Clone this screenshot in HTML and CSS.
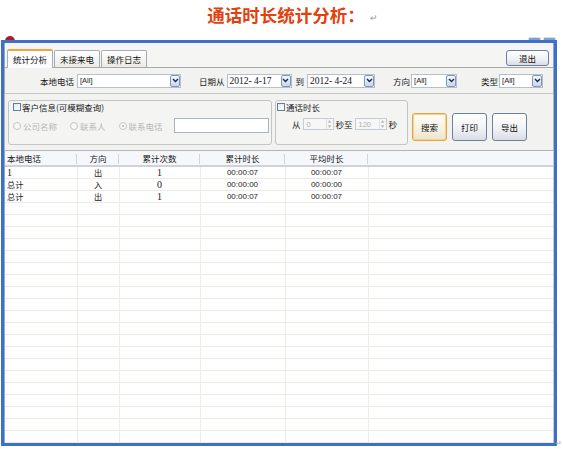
FILE: index.html
```html
<!DOCTYPE html>
<html>
<head>
<meta charset="utf-8">
<link rel="stylesheet" href="styles.css">
</head>
<body>
<div class="doc-title"><span class="t">通话时长统计分析：</span><span class="ret">↵</span></div>
<span class="appicon"></span>
<span class="capbtns"><i></i><i></i></span>
<div class="window">
  <div class="tabbar">
    <div class="tab active">统计分析</div>
    <div class="tab">未接来电</div>
    <div class="tab">操作日志</div>
    <button class="btn exit">退出</button>
  </div>
  <div class="filters">
    <span class="lbl l1">本地电话</span>
    <div class="combo c1"><span class="val">[All]</span><span class="dd"><svg width="7" height="5" viewBox="0 0 7 5"><path d="M1 1l2.5 2.5L6 1" stroke="#1d2a44" stroke-width="1.4" fill="none"/></svg></span></div>
    <span class="lbl l2">日期从</span>
    <div class="combo date d1"><span class="val">2012- 4-17</span><span class="dd"><svg width="7" height="5" viewBox="0 0 7 5"><path d="M1 1l2.5 2.5L6 1" stroke="#1d2a44" stroke-width="1.4" fill="none"/></svg></span></div>
    <span class="lbl l3">到</span>
    <div class="combo date d2"><span class="val">2012- 4-24</span><span class="dd"><svg width="7" height="5" viewBox="0 0 7 5"><path d="M1 1l2.5 2.5L6 1" stroke="#1d2a44" stroke-width="1.4" fill="none"/></svg></span></div>
    <span class="lbl l4">方向</span>
    <div class="combo c2"><span class="val">[All]</span><span class="dd"><svg width="7" height="5" viewBox="0 0 7 5"><path d="M1 1l2.5 2.5L6 1" stroke="#1d2a44" stroke-width="1.4" fill="none"/></svg></span></div>
    <span class="lbl l5">类型</span>
    <div class="combo c3"><span class="val">[All]</span><span class="dd"><svg width="7" height="5" viewBox="0 0 7 5"><path d="M1 1l2.5 2.5L6 1" stroke="#1d2a44" stroke-width="1.4" fill="none"/></svg></span></div>
  </div>
  <div class="query">
    <div class="group g1">
      <div class="gtitle"><span class="chk"></span>客户信息(可模糊查询)</div>
      <div class="radios">
        <span class="radio"></span><span class="rl">公司名称</span>
        <span class="radio"></span><span class="rl">联系人</span>
        <span class="radio on"></span><span class="rl">联系电话</span>
        <span class="textbox"></span>
      </div>
    </div>
    <div class="group g2">
      <div class="gtitle"><span class="chk"></span>通话时长</div>
      <div class="spins">
        <span class="sl">从</span>
        <span class="spin s1"><span class="sv">0</span><span class="arr"><b>▲</b><b>▼</b></span></span>
        <span class="sl">秒至</span>
        <span class="spin s2"><span class="sv">120</span><span class="arr"><b>▲</b><b>▼</b></span></span>
        <span class="sl">秒</span>
      </div>
    </div>
    <button class="btn big focus">搜索</button>
    <button class="btn big">打印</button>
    <button class="btn big">导出</button>
  </div>
  <div class="grid">
    <table>
      <colgroup><col class="k1"><col class="k2"><col class="k3"><col class="k4"><col class="k5"><col></colgroup>
      <thead>
        <tr><th class="left">本地电话</th><th>方向</th><th>累计次数</th><th>累计时长</th><th>平均时长</th><th></th></tr>
      </thead>
      <tbody>
        <tr><td class="name num">1</td><td class="dir">出</td><td class="cnt">1</td><td class="tm">00:00:07</td><td class="tm">00:00:07</td><td></td></tr>
        <tr><td class="name">总计</td><td class="dir">入</td><td class="cnt">0</td><td class="tm">00:00:00</td><td class="tm">00:00:00</td><td></td></tr>
        <tr><td class="name">总计</td><td class="dir">出</td><td class="cnt">1</td><td class="tm">00:00:07</td><td class="tm">00:00:07</td><td></td></tr>
        <tr><td></td><td></td><td></td><td></td><td></td><td></td></tr>
        <tr><td></td><td></td><td></td><td></td><td></td><td></td></tr>
        <tr><td></td><td></td><td></td><td></td><td></td><td></td></tr>
        <tr><td></td><td></td><td></td><td></td><td></td><td></td></tr>
        <tr><td></td><td></td><td></td><td></td><td></td><td></td></tr>
        <tr><td></td><td></td><td></td><td></td><td></td><td></td></tr>
        <tr><td></td><td></td><td></td><td></td><td></td><td></td></tr>
        <tr><td></td><td></td><td></td><td></td><td></td><td></td></tr>
        <tr><td></td><td></td><td></td><td></td><td></td><td></td></tr>
        <tr><td></td><td></td><td></td><td></td><td></td><td></td></tr>
        <tr><td></td><td></td><td></td><td></td><td></td><td></td></tr>
        <tr><td></td><td></td><td></td><td></td><td></td><td></td></tr>
        <tr><td></td><td></td><td></td><td></td><td></td><td></td></tr>
        <tr><td></td><td></td><td></td><td></td><td></td><td></td></tr>
        <tr><td></td><td></td><td></td><td></td><td></td><td></td></tr>
        <tr><td></td><td></td><td></td><td></td><td></td><td></td></tr>
        <tr><td></td><td></td><td></td><td></td><td></td><td></td></tr>
        <tr><td></td><td></td><td></td><td></td><td></td><td></td></tr>
        <tr><td></td><td></td><td></td><td></td><td></td><td></td></tr>
        <tr><td></td><td></td><td></td><td></td><td></td><td></td></tr>
        <tr><td></td><td></td><td></td><td></td><td></td><td></td></tr>
        <tr><td></td><td></td><td></td><td></td><td></td><td></td></tr>
      </tbody>
    </table>
  </div>
</div>
<span class="ret2">↵</span>
</body>
</html>
```
FILE: styles.css
```css
* { box-sizing: border-box; margin: 0; padding: 0; }
html, body { background: #fff; }
body {
  width: 563px; height: 449px; overflow: hidden; position: relative;
  font-family: "Noto Sans CJK SC", "Liberation Sans", sans-serif;
  font-size: 8.5px; color: #1a1a1a;
}
.doc-title {
  height: 40px; display: flex; justify-content: center; align-items: flex-start;
  padding-top: 5px; padding-left: 22px;
}
.doc-title .t { font-size: 17.5px; font-weight: 700; color: #e2410e; line-height: 20px; }
.doc-title .ret { font-size: 9px; color: #9a9a9a; margin-left: 5px; line-height: 20px; margin-top: 3px; }

.appicon { position: absolute; left: 5px; top: 36px; width: 10px; height: 5px; background: #a8202a; border-radius: 5px 5px 0 0; }
.capbtns { position: absolute; left: 528px; top: 37px; display: flex; gap: 2px; }
.capbtns i { display: block; width: 13px; height: 4px; border: 1px solid #d6def0; border-bottom: none; background: #7f9fd8; border-radius: 2px 2px 0 0; }

.window {
  position: relative; margin-left: 1px; width: 556px; height: 406px;
  border: solid #3e70c8; border-width: 3px 3px 3px 3px;
  background: #f0f0ee; display: flex; flex-direction: column;
  box-shadow: inset 0 0 0 1px #8aa6d8;
}

/* tabs */
.tabbar {
  height: 24px; display: flex; align-items: flex-end; padding-left: 2px; background: #f5f5f3;
  border-left: 1px solid #8aa6d8; border-right: 1px solid #8aa6d8;
}
.tab {
  height: 17px; padding: 0 5px; line-height: 16px; font-size: 8.5px;
  border: 1px solid #a4acbc; border-bottom: none; border-radius: 2px 2px 0 0;
  background: linear-gradient(#ffffff, #ecebe6); margin-right: 1px; color: #111;
}
.tab.active {
  height: 19px; line-height: 17px; background: #fcfcfe;
  border-top: 2px solid #f0a53a; margin-bottom: -1px; position: relative; z-index: 1;
}
.btn {
  font-family: "Noto Sans CJK SC", "Liberation Sans", sans-serif; font-size: 8.5px; color: #111;
  border: 1px solid #6c7f9c; border-radius: 3px;
  background: linear-gradient(#ffffff, #f1f2f5 55%, #d9dde5);
}
.btn.exit { margin-left: auto; align-self: flex-start; margin-top: 7px; margin-right: 4px; width: 43px; height: 16px; }

/* filter row */
.filters {
  height: 27px; display: flex; align-items: center;
  border: 1px solid #a8a8a8; border-bottom-color: #c6c6c6; background: #f2f2f0;
}
.lbl { white-space: nowrap; }
.l1 { margin-left: 35px; }
.l2 { margin-left: 18px; }
.l3 { margin-left: 4px; }
.l4 { margin-left: 18px; }
.l5 { margin-left: 24px; }
.combo {
  height: 14px; display: flex; align-items: center; justify-content: space-between;
  background: #fff; border: 1px solid #b6c0cc; padding-left: 2px;
}
.combo .val { font-family: "Liberation Sans", sans-serif; font-size: 7.5px; color: #222; }
.combo.date .val { font-family: "Liberation Serif", serif; font-size: 9.5px; color: #111; }
.dd {
  width: 10px; height: 12px; display: flex; align-items: center; justify-content: center;
  border: 1px solid #7f95bb; border-radius: 2px; background: linear-gradient(#f4f7fc, #c9d6ec);
}
.c1 { margin-left: 3px; width: 104px; }
.d1 { margin-left: 2px; width: 65px; }
.d2 { margin-left: 3px; width: 68px; }
.c2 { margin-left: 1px; width: 46px; }
.c3 { margin-left: 1px; width: 44px; }

/* query */
.query {
  height: 57px; display: flex; align-items: flex-start; padding: 6px 0 0 3px;
  border: 1px solid #b4b4b4; border-top: none; background: #f2f2f0;
}
.group { height: 45px; border: 1px solid #c4c4c4; border-radius: 3px; background: #f4f4f2; }
.g1 { width: 264px; padding: 1px 0 0 4px; }
.g2 { width: 133px; margin-left: 3px; padding: 1px 0 0 1px; }
.gtitle { display: flex; align-items: center; height: 10px; white-space: nowrap; }
.chk {
  width: 8px; height: 8px; border: 1px solid #5e7ea8; background: linear-gradient(135deg, #e6e6e0, #fff);
  margin-right: 1px;
}
.radios { display: flex; align-items: center; margin-top: 6px; color: #b8b8b8; }
.radio {
  width: 8px; height: 8px; border: 1px solid #c4c4c4; border-radius: 50%; background: #f8f8f8;
  margin-right: 2px; position: relative;
}
.radio.on::after { content: ""; position: absolute; left: 2px; top: 2px; width: 2px; height: 2px; border-radius: 50%; background: #b0b0b0; }
.rl { margin-right: 13px; }
.textbox { width: 95px; height: 15px; border: 1px solid #a8b4c0; background: #fff; margin-left: -2px; }
.spins { display: flex; align-items: center; margin-top: 6px; padding-left: 15px; }
.sl { color: #222; }
.spin {
  height: 12px; display: flex; align-items: center; justify-content: space-between;
  border: 1px solid #c4ccd4; background: #f7f7f7; margin: 0 2px; padding-left: 3px;
}
.s1 { width: 31px; }
.s2 { width: 32px; }
.sv { font-family: "Liberation Sans", sans-serif; font-size: 7.5px; color: #b0b0b0; }
.arr { display: flex; flex-direction: column; width: 7px; height: 10px; border-left: 1px solid #e0e0e0; }
.arr b { font-size: 3.5px; line-height: 5px; color: #b8b8b8; font-weight: normal; text-align: center; }
.btn.big { width: 35px; height: 28px; margin-top: 13px; margin-left: 5px; }
.btn.big.focus { margin-left: 4px; border-color: #e6a244; box-shadow: inset 0 0 0 1px #f7d48a; background: linear-gradient(#fffdf6, #f6f1e2 60%, #ebe3cc); }

/* grid */
.grid { flex: 1; background: #fff; border-left: 1px solid #8ca6d6; border-right: 1px solid #c8cbd0; overflow: hidden; }
table { border-collapse: collapse; table-layout: fixed; width: 548px; }
col.k1 { width: 72px; }
col.k2 { width: 42px; }
col.k3 { width: 81px; }
col.k4 { width: 85px; }
col.k5 { width: 83px; }
th {
  height: 15px; font-weight: normal; font-size: 8.5px; color: #222; text-align: center;
  background: #f6f7fb; border-bottom: 2px solid #cfd2d8; position: relative; padding: 0;
}
th.left { text-align: left; padding-left: 2px; }
th::after { content: ""; position: absolute; right: 0; top: 3px; height: 10px; border-right: 1px solid #d4d4d4; }
th:last-child::after { display: none; }
td {
  height: 12px; padding: 0; line-height: 11px; border-right: 1px solid #efeee6; border-bottom: 1px solid #ebebe4;
  text-align: center; white-space: nowrap; overflow: hidden;
}
td:last-child { border-right: none; }
td.name { text-align: left; padding-left: 2px; font-size: 8.2px; }
td.name.num { font-family: "Liberation Serif", serif; font-size: 10px; }
td.dir { font-size: 8.2px; }
td.cnt { font-family: "Liberation Serif", serif; font-size: 10px; }
td.tm { font-family: "Liberation Sans", sans-serif; font-size: 8px; color: #222; }

.ret2 { position: absolute; left: 555px; top: 437px; font-size: 8px; color: #999; }
```
